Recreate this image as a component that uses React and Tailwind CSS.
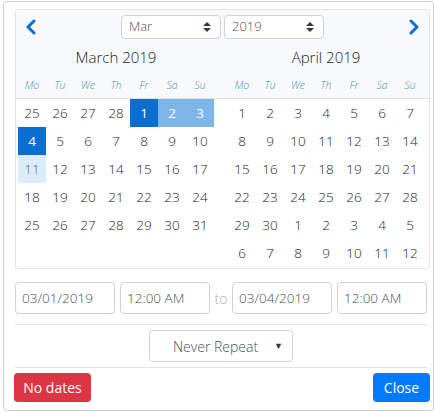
import React from 'react'

const font = { fontFamily: '"Segoe UI", "Open Sans", "Liberation Sans", sans-serif' }

const weekDays = ['Mo', 'Tu', 'We', 'Th', 'Fr', 'Sa', 'Su']

const march = [
  [25, 26, 27, 28, 1, 2, 3],
  [4, 5, 6, 7, 8, 9, 10],
  [11, 12, 13, 14, 15, 16, 17],
  [18, 19, 20, 21, 22, 23, 24],
  [25, 26, 27, 28, 29, 30, 31],
]

const april = [
  [1, 2, 3, 4, 5, 6, 7],
  [8, 9, 10, 11, 12, 13, 14],
  [15, 16, 17, 18, 19, 20, 21],
  [22, 23, 24, 25, 26, 27, 28],
  [29, 30, 1, 2, 3, 4, 5],
  [6, 7, 8, 9, 10, 11, 12],
]

// which cells are selected in march (row, col)
function marchCell(r, c) {
  if ((r === 0 && c === 4) || (r === 1 && c === 0)) return 'bg-[#0a6ed1] text-white font-normal'
  if (r === 0 && (c === 5 || c === 6)) return 'bg-[#7eb6ea] text-white font-normal'
  if (r === 2 && c === 0) return 'bg-[#ddecfb] text-[#4f6d8a]'
  return 'text-[#212529]'
}

function Chevron({ dir }) {
  return (
    <svg width="12" height="16" viewBox="0 0 12 16">
      <polyline
        points={dir === 'left' ? '9,2 3,8 9,14' : '3,2 9,8 3,14'}
        fill="none"
        stroke="#0a6ed1"
        strokeWidth="3"
        strokeLinecap="round"
        strokeLinejoin="round"
      />
    </svg>
  )
}

function UpDown() {
  return (
    <svg width="8" height="12" viewBox="0 0 8 12">
      <polygon points="0,5 4,1 8,5" fill="#343a40" />
      <polygon points="0,7 4,11 8,7" fill="#343a40" />
    </svg>
  )
}

function Select({ value }) {
  return (
    <div className="w-[100px] h-6 bg-white border border-[#ced4da] rounded flex items-center justify-between pl-[7px] pr-[9px] text-[13px] text-[#495057]">
      <span>{value}</span>
      <UpDown />
    </div>
  )
}

function Month({ title, rows, cellClass }) {
  return (
    <div className="w-[196px]">
      <div className="h-[89px] flex flex-col">
        <div className="h-[37px]" />
        <div className="text-center text-[15px] text-[#212529] leading-[20px]">{title}</div>
        <div className="grid grid-cols-7 mt-[11px]">
          {weekDays.map(d => (
            <div key={d} className="text-center text-[10.5px] italic text-[#4a8db8] leading-[14px]">{d}</div>
          ))}
        </div>
      </div>
      <div className="grid grid-cols-7">
        {rows.map((row, r) =>
          row.map((n, c) => (
            <div key={r + '-' + c} className={'h-7 flex items-center justify-center text-[13.5px] ' + cellClass(r, c)}>
              {n}
            </div>
          ))
        )}
      </div>
    </div>
  )
}

function Input({ value, w }) {
  return (
    <div className={w + ' h-8 border border-[#ced4da] rounded flex items-center pl-[6px] text-[13.5px] text-[#495057]'}>
      {value}
    </div>
  )
}

export default function App() {
  return (
    <div className="w-[436px] h-[413px] bg-white font-light" style={font}>
      <div className="ml-[3px] mt-px w-[431px] h-[410px] border border-[#d0d0d0] rounded-[4px] px-[11px] pt-[7px]">
        {/* calendars */}
        <div className="relative w-[415px] h-[260px] border border-[#e1e4e8] rounded-[3px] overflow-hidden">
          <div className="absolute left-0 top-0 w-full h-[89px] bg-[#f7f9fb] border-b border-[#dee2e6]" />
          <div className="absolute left-0 top-0 w-full pt-[5px] flex items-center justify-between px-[9px]">
            <Chevron dir="left" />
            <div className="flex gap-[3px]">
              <Select value="Mar" />
              <Select value="2019" />
            </div>
            <Chevron dir="right" />
          </div>
          <div className="relative flex gap-[14px] px-[2px]">
            <Month title="March 2019" rows={march} cellClass={marchCell} />
            <Month title="April 2019" rows={april} cellClass={() => 'text-[#212529]'} />
          </div>
        </div>

        {/* date / time inputs */}
        <div className="flex items-center mt-[13px] border-b border-[#dee2e6] pb-[10px] w-[412px]">
          <Input value="03/01/2019" w="w-[100px]" />
          <div className="ml-[5px]"><Input value="12:00 AM" w="w-[90px]" /></div>
          <span className="w-[22px] text-center text-[14px] text-[#adb5bd]">to</span>
          <Input value="03/04/2019" w="w-[100px]" />
          <div className="ml-[5px]"><Input value="12:00 AM" w="w-[90px]" /></div>
        </div>

        {/* repeat */}
        <div className="flex justify-center border-b border-[#dee2e6] pt-[5px] pb-[5px] w-[412px]">
          <div className="w-[144px] h-8 border border-[#ced4da] rounded flex items-center justify-between pl-[23px] pr-[9px] text-[14px] text-[#495057]">
            <span>Never Repeat</span>
            <span className="text-[9px] text-[#343a40]">▼</span>
          </div>
        </div>

        {/* buttons */}
        <div className="flex justify-between mt-[5px] w-[416px] -ml-px">
          <button className="w-[77px] h-[29px] rounded bg-[#dc3545] text-white text-[14px] font-normal">No dates</button>
          <button className="w-[57px] h-[29px] rounded bg-[#007bff] text-white text-[14px] font-normal">Close</button>
        </div>
      </div>
    </div>
  )
}
